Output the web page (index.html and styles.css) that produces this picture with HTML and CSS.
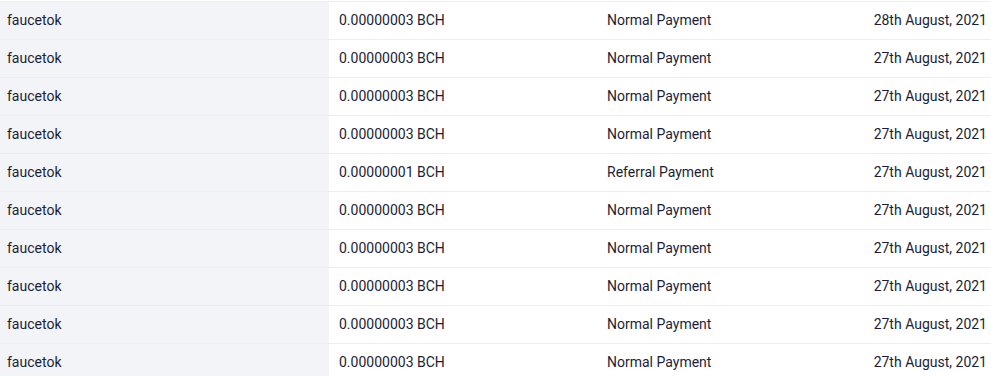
FILE: index.html
```html
<!DOCTYPE html>
<html>
<head>
<meta charset="utf-8">
<link rel="stylesheet" href="styles.css">
</head>
<body>
<table class="payments">
<tbody>
<tr><td class="user">faucetok</td><td class="amount">0.00000003 BCH</td><td class="type">Normal Payment</td><td class="date">28th August, 2021</td></tr>
<tr><td class="user">faucetok</td><td class="amount">0.00000003 BCH</td><td class="type">Normal Payment</td><td class="date">27th August, 2021</td></tr>
<tr><td class="user">faucetok</td><td class="amount">0.00000003 BCH</td><td class="type">Normal Payment</td><td class="date">27th August, 2021</td></tr>
<tr><td class="user">faucetok</td><td class="amount">0.00000003 BCH</td><td class="type">Normal Payment</td><td class="date">27th August, 2021</td></tr>
<tr><td class="user">faucetok</td><td class="amount">0.00000001 BCH</td><td class="type">Referral Payment</td><td class="date">27th August, 2021</td></tr>
<tr><td class="user">faucetok</td><td class="amount">0.00000003 BCH</td><td class="type">Normal Payment</td><td class="date">27th August, 2021</td></tr>
<tr><td class="user">faucetok</td><td class="amount">0.00000003 BCH</td><td class="type">Normal Payment</td><td class="date">27th August, 2021</td></tr>
<tr><td class="user">faucetok</td><td class="amount">0.00000003 BCH</td><td class="type">Normal Payment</td><td class="date">27th August, 2021</td></tr>
<tr><td class="user">faucetok</td><td class="amount">0.00000003 BCH</td><td class="type">Normal Payment</td><td class="date">27th August, 2021</td></tr>
<tr><td class="user">faucetok</td><td class="amount">0.00000003 BCH</td><td class="type">Normal Payment</td><td class="date">27th August, 2021</td></tr>
</tbody>
</table>
</body>
</html>
```
FILE: styles.css
```css
html, body {
  margin: 0;
  padding: 0;
  background: #ffffff;
}
body {
  padding-top: 1px;
  font-family: Roboto, "Liberation Sans", sans-serif;
  font-size: 14px;
  color: #1b1e35;
}
.payments {
  width: 991px;
  border-collapse: collapse;
  table-layout: fixed;
}
.payments td {
  height: 36px;
  padding: 0 0 1px 0;
  border-top: 1px solid #ebeef5;
  vertical-align: middle;
  white-space: nowrap;
  line-height: 16px;
}
.payments .user {
  width: 322px;
  padding-left: 7px;
  background: #f3f4f8;
}
.payments .amount {
  width: 268px;
  padding-left: 10px;
}
.payments .type {
  width: 200px;
  padding-left: 0;
}
.payments .date {
  text-align: right;
  padding-right: 4px;
}
```
